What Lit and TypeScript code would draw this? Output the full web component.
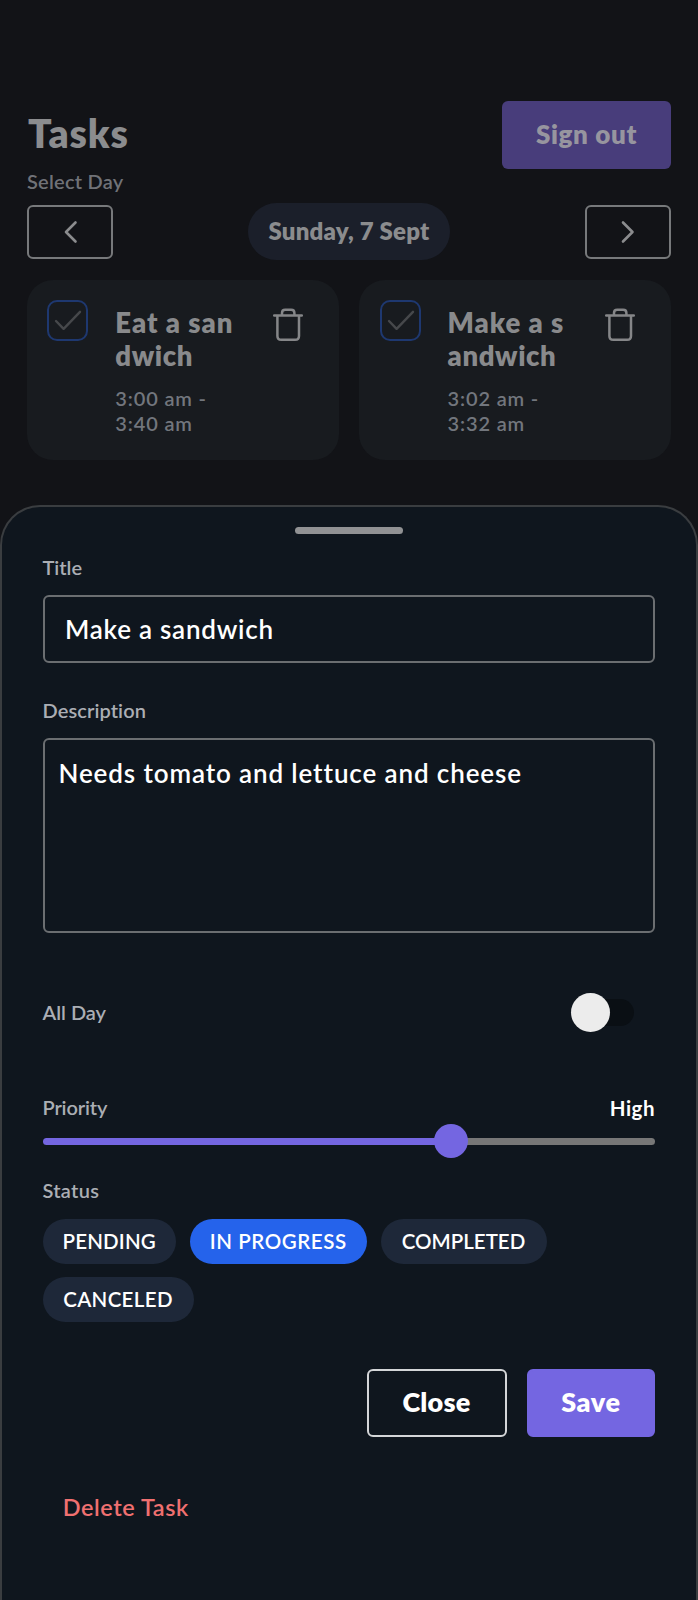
import { LitElement, html, css, svg } from "lit";
import { classMap } from "lit/directives/class-map.js";

interface Task {
  lines: [string, string];
  from: string;
  to: string;
}

const TASKS: Task[] = [
  { lines: ["Eat a san", "dwich"], from: "3:00 am -", to: "3:40 am" },
  { lines: ["Make a s", "andwich"], from: "3:02 am -", to: "3:32 am" },
];

const STATUSES = [
  { label: "PENDING", size: "w-pending" },
  { label: "IN PROGRESS", size: "w-progress" },
  { label: "COMPLETED", size: "w-completed" },
  { label: "CANCELED", size: "w-canceled" },
];

const chevron = (points: string) => html`
  <svg class="chevron" width="16" height="24" viewBox="0 0 16 24">
    ${svg`<polyline points=${points} />`}
  </svg>
`;

class TaskCard extends LitElement {
  static properties = { task: { attribute: false } };
  declare task: Task;

  static styles = css`
    :host {
      display: flex;
      box-sizing: border-box;
      height: 180px;
      padding: 20px 19px 0 20.3px;
      border-radius: 26px;
      background: #181b1f;
      color: #898a8c;
    }
    .check {
      flex: none;
      box-sizing: border-box;
      width: 41px;
      height: 41px;
      border: 2px solid #1e3870;
      border-radius: 10px;
    }
    .check svg,
    .trash {
      display: block;
      fill: none;
      stroke-linecap: round;
      stroke-linejoin: round;
    }
    .check svg {
      stroke: #46484b;
      stroke-width: 2.4;
    }
    .body {
      width: 156.7px;
      margin-left: 27px;
      padding-top: 5.5px;
      white-space: nowrap;
    }
    .title {
      font-size: 27.5px;
      font-weight: 800;
      line-height: 33px;
      letter-spacing: 0.95px;
    }
    .title .second {
      letter-spacing: 0.6px;
    }
    .time {
      margin: 14px 0 0;
      font-size: 20px;
      font-weight: 600;
      line-height: 25.4px;
      letter-spacing: 0.85px;
      color: #72767d;
    }
    .trash {
      margin-top: 7.7px;
      stroke: #858688;
      stroke-width: 2.5;
    }
  `;

  render() {
    return html`
      <div class="check">
        <svg width="37" height="37" viewBox="0 0 37 37">
          <polyline points="7,19 14.6,26.8 31,9.8" />
        </svg>
      </div>
      <div class="body">
        <div class="title">${this.task.lines[0]}<br /><span class="second">${this.task.lines[1]}</span></div>
        <div class="time">${this.task.from}<br />${this.task.to}</div>
      </div>
      <svg class="trash" width="32" height="36" viewBox="0 0 32 36">
        <path d="M2.2 7.4H29.8M5.4 7.4V28Q5.4 31.8 9.2 31.8H23.2Q27 31.8 27 28V7.4M10 7.2V5Q10 1.8 13.2 1.8H19.2Q22.4 1.8 22.4 5V7.2" />
      </svg>
    `;
  }
}
customElements.define("task-card", TaskCard);

class TaskSheet extends LitElement {
  static properties = { status: { state: true }, priority: { state: true } };
  declare status: string;
  declare priority: number;

  constructor() {
    super();
    this.status = "IN PROGRESS";
    this.priority = 66.7;
  }

  static styles = css`
    :host {
      display: flex;
      flex-direction: column;
      box-sizing: border-box;
      padding: 0 41px 0 40.5px;
      border: 2px solid #3a3d40;
      border-bottom: 0;
      border-radius: 40px 40px 0 0;
      background: #0f161e;
      color: #fff;
      white-space: nowrap;
    }
    .handle {
      flex: none;
      align-self: center;
      width: 108.5px;
      height: 7px;
      margin: 20px 0 0 0.5px;
      border-radius: 4px;
      background: #919294;
    }
    .label {
      font-size: 20px;
      font-weight: 600;
      line-height: 24px;
      color: #abaeb4;
    }
    .title-label {
      margin-top: 21.3px;
    }
    .field {
      box-sizing: border-box;
      border: 2px solid #6b6e71;
      border-radius: 6px;
      font-size: 26px;
      font-weight: 600;
      letter-spacing: 0.88px;
    }
    .title-field {
      height: 68px;
      margin-top: 16.2px;
      padding-left: 20.5px;
      line-height: 64px;
      letter-spacing: 0.75px;
    }
    .desc-label {
      margin-top: 34.6px;
      letter-spacing: 0.1px;
    }
    .desc-field {
      height: 194.5px;
      margin-top: 16px;
      padding: 17px 14px 0;
      line-height: 32px;
    }
    .row {
      display: flex;
      justify-content: space-between;
      align-items: center;
    }
    .all-day {
      height: 39px;
      margin-top: 60.7px;
      padding-right: 20.5px;
    }
    .all-day .label {
      margin-top: -2px;
    }
    .switch {
      display: flex;
      align-items: center;
      width: 63.5px;
      height: 39px;
    }
    .thumb {
      flex: none;
      z-index: 1;
      width: 39px;
      height: 39px;
      border-radius: 50%;
      background: #ececec;
    }
    .track {
      width: 43px;
      height: 27px;
      margin-left: -19px;
      border-radius: 0 14px 14px 0;
      background: #0a0f14;
    }
    .priority {
      margin-top: 63.2px;
    }
    .priority .label {
      letter-spacing: -0.15px;
    }
    .priority .level {
      padding-top: 2px;
      font-size: 20.5px;
      font-weight: 700;
      line-height: 22px;
      letter-spacing: 0.5px;
    }
    .slider {
      display: flex;
      align-items: center;
      height: 34px;
      margin-top: 4.6px;
    }
    .fill,
    .rest {
      height: 7px;
    }
    .fill {
      border-radius: 4px 0 0 4px;
      background: #7466e1;
    }
    .rest {
      flex: 1;
      border-radius: 0 4px 4px 0;
      background: #777777;
    }
    .knob {
      flex: none;
      z-index: 1;
      width: 34px;
      height: 34px;
      margin: 0 -17px;
      border-radius: 50%;
      background: #7466e1;
    }
    .status-label {
      margin-top: 20.4px;
      letter-spacing: 0.3px;
    }
    .chips {
      display: flex;
      flex-wrap: wrap;
      gap: 13.5px;
      margin-top: 16.7px;
    }
    .chip {
      height: 44.5px;
      border-radius: 23px;
      background: #1e2839;
      font-size: 20.5px;
      font-weight: 600;
      line-height: 45.5px;
      text-align: center;
    }
    .chip.active {
      background: #2563eb;
    }
    .w-pending {
      width: 133.5px;
      letter-spacing: 0.15px;
    }
    .w-progress {
      width: 177.5px;
      letter-spacing: 0.55px;
    }
    .w-completed {
      width: 166px;
    }
    .w-canceled {
      width: 151px;
      letter-spacing: 0.35px;
    }
    .actions {
      display: flex;
      justify-content: flex-end;
      gap: 20.5px;
      margin-top: 47.5px;
    }
    .btn {
      box-sizing: border-box;
      height: 68px;
      border: 2px solid #d4d6d8;
      border-radius: 6px;
      font-size: 27px;
      font-weight: 800;
      line-height: 62px;
      text-align: center;
    }
    .close {
      width: 140px;
      letter-spacing: 0.25px;
    }
    .save {
      width: 128px;
      border-color: #7466e1;
      background: #7466e1;
      letter-spacing: 0.65px;
    }
    .delete {
      margin: 56.3px 0 0 20.2px;
      color: #f07070;
      font-size: 23.5px;
      font-weight: 600;
      line-height: 28px;
      letter-spacing: 0.55px;
    }
  `;

  render() {
    return html`
      <div class="handle"></div>
      <div class="label title-label">Title</div>
      <div class="field title-field">Make a sandwich</div>
      <div class="label desc-label">Description</div>
      <div class="field desc-field">Needs tomato and lettuce and cheese</div>
      <div class="row all-day">
        <div class="label">All Day</div>
        <div class="switch">
          <div class="thumb"></div>
          <div class="track"></div>
        </div>
      </div>
      <div class="row priority">
        <div class="label">Priority</div>
        <div class="level">High</div>
      </div>
      <div class="slider">
        <div class="fill" style="width:${this.priority}%"></div>
        <div class="knob"></div>
        <div class="rest"></div>
      </div>
      <div class="label status-label">Status</div>
      <div class="chips">
        ${STATUSES.map(
          (s) => html`<div
            class=${classMap({ chip: true, [s.size]: true, active: s.label === this.status })}
            @click=${() => (this.status = s.label)}
          >${s.label}</div>`
        )}
      </div>
      <div class="actions">
        <div class="btn close">Close</div>
        <div class="btn save">Save</div>
      </div>
      <div class="delete">Delete Task</div>
    `;
  }
}
customElements.define("task-sheet", TaskSheet);

class AppRoot extends LitElement {
  static styles = css`
    :host {
      display: block;
      position: relative;
      box-sizing: border-box;
      height: 1600px;
      padding: 101px 27px 0;
      overflow: hidden;
      background: #121317;
      color: #8b8c8e;
      font-family: "Lato", "Open Sans", sans-serif;
      white-space: nowrap;
    }
    .header {
      display: flex;
      justify-content: space-between;
      height: 68px;
    }
    .heading {
      margin: 0 0 0 1px;
      font-size: 39px;
      font-weight: 800;
      line-height: 65px;
      letter-spacing: 0.9px;
    }
    .sign-out {
      width: 169px;
      border-radius: 6px;
      background: #483d7b;
      color: #97959f;
      font-size: 26px;
      font-weight: 800;
      line-height: 66px;
      letter-spacing: 0.65px;
      text-align: center;
    }
    .select-day {
      font-size: 20px;
      font-weight: 600;
      line-height: 24px;
      letter-spacing: 0.25px;
      color: #707277;
    }
    .days {
      display: flex;
      justify-content: space-between;
      align-items: center;
      height: 57px;
      margin-top: 10px;
    }
    .nav {
      display: flex;
      align-items: center;
      justify-content: center;
      box-sizing: border-box;
      width: 86px;
      height: 54px;
      margin-top: 1px;
      border: 2px solid #77797b;
      border-radius: 6px;
    }
    .chevron {
      fill: none;
      stroke: #8b8c8e;
      stroke-width: 2.6;
      stroke-linecap: round;
      stroke-linejoin: round;
    }
    .day {
      width: 202px;
      height: 57px;
      border-radius: 29px;
      background: #1b1f2a;
      font-size: 24px;
      font-weight: 800;
      line-height: 55px;
      letter-spacing: 0.2px;
      text-align: center;
    }
    .cards {
      display: grid;
      grid-template-columns: 1fr 1fr;
      gap: 20.5px;
      margin-top: 20px;
    }
    .sheet {
      position: absolute;
      top: 505px;
      right: 0;
      bottom: 0;
      left: 0;
    }
  `;

  render() {
    return html`
      <div class="header">
        <h1 class="heading">Tasks</h1>
        <div class="sign-out">Sign out</div>
      </div>
      <div class="select-day">Select Day</div>
      <div class="days">
        <div class="nav">${chevron("13.5,2.5 4,12 13.5,21.5")}</div>
        <div class="day">Sunday, 7 Sept</div>
        <div class="nav">${chevron("3,2.5 12.5,12 3,21.5")}</div>
      </div>
      <div class="cards">${TASKS.map((t) => html`<task-card .task=${t}></task-card>`)}</div>
      <task-sheet class="sheet"></task-sheet>
    `;
  }
}
customElements.define("app-root", AppRoot);
